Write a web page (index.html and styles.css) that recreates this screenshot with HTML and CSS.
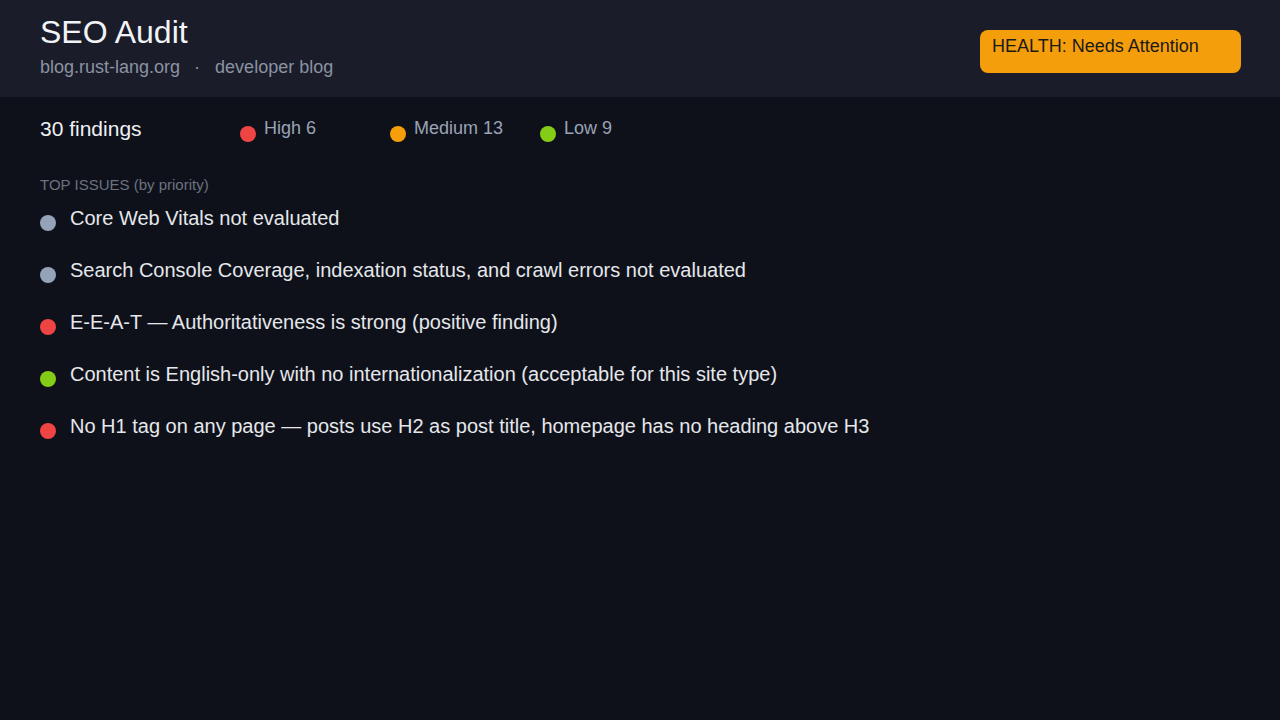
FILE: index.html
```html
<!DOCTYPE html>
<html lang="en">
<head>
<meta charset="utf-8">
<title>SEO Audit</title>
<link rel="stylesheet" href="styles.css">
</head>
<body>
<header class="header">
  <div class="header-text">
    <h1 class="title">SEO Audit</h1>
    <div class="subtitle"><span>blog.rust-lang.org</span><span class="sep">·</span><span>developer blog</span></div>
  </div>
  <div class="badge">HEALTH: Needs Attention</div>
</header>
<main class="main">
  <div class="summary">
    <div class="total">30 findings</div>
    <div class="sev"><span class="dot red"></span><span class="sev-label">High 6</span></div>
    <div class="sev"><span class="dot orange"></span><span class="sev-label">Medium 13</span></div>
    <div class="sev"><span class="dot green"></span><span class="sev-label">Low 9</span></div>
  </div>
  <div class="section-label">TOP ISSUES (by priority)</div>
  <ul class="issues">
    <li class="issue"><span class="dot gray"></span><span>Core Web Vitals not evaluated</span></li>
    <li class="issue"><span class="dot gray"></span><span>Search Console Coverage, indexation status, and crawl errors not evaluated</span></li>
    <li class="issue"><span class="dot red"></span><span>E-E-A-T — Authoritativeness is strong (positive finding)</span></li>
    <li class="issue"><span class="dot green"></span><span>Content is English-only with no internationalization (acceptable for this site type)</span></li>
    <li class="issue"><span class="dot red"></span><span>No H1 tag on any page — posts use H2 as post title, homepage has no heading above H3</span></li>
  </ul>
</main>
</body>
</html>
```

FILE: styles.css
```css
* { box-sizing: border-box; }
html, body {
  margin: 0;
  padding: 0;
  background: #0f111a;
  font-family: "Liberation Sans", Arial, sans-serif;
  color: #e5e7eb;
}
body { width: 1280px; height: 720px; overflow: hidden; }

.header {
  height: 97px;
  background: #1a1d29;
  display: flex;
  justify-content: space-between;
  align-items: flex-start;
  padding: 12px 39px 0 40px;
}
.title {
  margin: 0;
  font-size: 32px;
  line-height: 40px;
  font-weight: 400;
  color: #f1f3f7;
}
.subtitle {
  margin-top: 3px;
  font-size: 18px;
  line-height: 24px;
  color: #8b92a2;
}
.sep { margin: 0 15px 0 14px; }

.badge {
  margin-top: 18px;
  width: 261px;
  height: 43px;
  background: #f59e0b;
  color: #1a1a1a;
  border-radius: 8px;
  font-size: 18px;
  line-height: 21px;
  padding: 6px 12px 0 12px;
}

.main { padding: 20px 40px 0 40px; }

.summary {
  display: flex;
  align-items: flex-start;
}
.total {
  width: 200px;
  font-size: 21px;
  line-height: 24px;
  color: #eef0f4;
}
.sev {
  width: 150px;
  display: flex;
  align-items: flex-start;
  gap: 8px;
}
.sev .dot { margin-top: 9px; }
.sev-label {
  font-size: 18px;
  line-height: 21px;
  margin-top: 1px;
  color: #9aa3b5;
}

.dot {
  flex: none;
  width: 16px;
  height: 16px;
  border-radius: 50%;
  display: inline-block;
}
.red { background: #ef4444; }
.orange { background: #f59e0b; }
.green { background: #84cc16; }
.gray { background: #94a3b8; }

.section-label {
  margin-top: 34px;
  font-size: 15px;
  line-height: 17px;
  color: #6b7280;
}

.issues {
  list-style: none;
  margin: 14px 0 0 0;
  padding: 0;
}
.issue {
  display: flex;
  align-items: flex-start;
  gap: 14px;
  font-size: 20px;
  line-height: 23px;
  color: #e5e7eb;
  margin-bottom: 28px;
}
.issue .dot { margin-top: 8px; }
```
